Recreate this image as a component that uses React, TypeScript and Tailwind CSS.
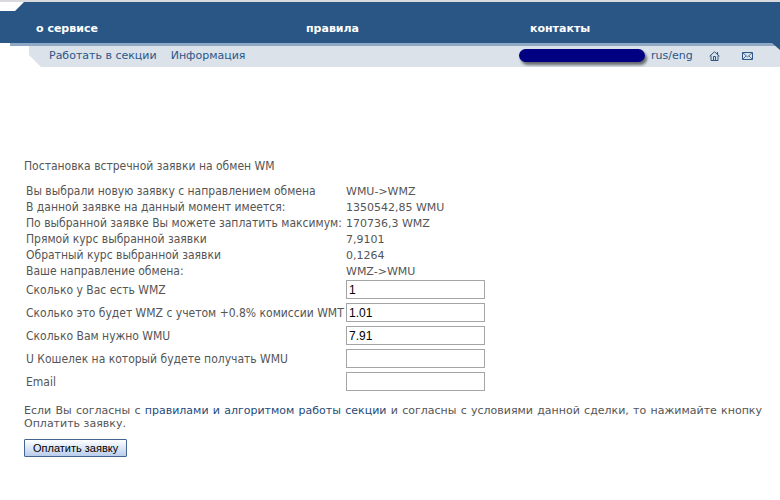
import { useState } from 'react'

const details = [
  { label: 'Вы выбрали новую заявку с направлением обмена', value: 'WMU->WMZ' },
  { label: 'В данной заявке на данный момент имеется:', value: '1350542,85 WMU' },
  { label: 'По выбранной заявке Вы можете заплатить максимум:', value: '170736,3 WMZ' },
  { label: 'Прямой курс выбранной заявки', value: '7,9101' },
  { label: 'Обратный курс выбранной заявки', value: '0,1264' },
  { label: 'Ваше направление обмена:', value: 'WMZ->WMU' },
]

const fields = [
  { id: 'have', label: 'Сколько у Вас есть WMZ' },
  { id: 'total', label: 'Сколько это будет WMZ с учетом +0.8% комиссии WMT' },
  { id: 'need', label: 'Сколько Вам нужно WMU' },
  { id: 'purse', label: 'U Кошелек на который будете получать WMU' },
  { id: 'email', label: 'Email' },
]

function HomeIcon() {
  return (
    <svg className="h-[10px] w-[11px]" viewBox="0 0 11 10" fill="none" stroke="#2b5687">
      <path d="M0.5 5.2L5.5 0.8L10.5 5.2M2 4.5V9.5H9V4.5M8.5 3V1" />
      <path d="M4.5 9V5.5H6.5V9" />
    </svg>
  )
}

function MailIcon() {
  return (
    <svg className="h-2 w-[11px]" viewBox="0 0 11 8" fill="none" stroke="#2b5687">
      <path d="M0.5 0.5H10.5V7.5H0.5Z" />
      <path d="M1 1L5.5 4.8L10 1M1 7L4 4M10 7L7 4" strokeWidth="0.8" />
    </svg>
  )
}

function Header() {
  return (
    <header className="relative border-t-2 border-[#d9dadd] text-[11px] leading-[14px]">
      <nav className="grid h-[41px] grid-cols-[270px_224px_1fr] bg-[#2a5685] pt-5 pl-9 font-bold text-white [clip-path:polygon(24px_0,100%_0,100%_100%,0_100%,0_9px,15px_9px)]">
        <a href="#service">о сервисе</a>
        <a href="#rules">правила</a>
        <a href="#contacts">контакты</a>
      </nav>
      <div className="ml-[10px] h-[3px] bg-[#8fa8c3]" />
      <div className="ml-[29px] flex h-[21px] items-center bg-[#dbe2ea] pb-[2px] pl-5 text-[#2b5687] [clip-path:polygon(0_0,100%_0,100%_100%,12px_100%,0_9px)]">
        <a href="#work">Работать в секции</a>
        <a href="#info" className="ml-[14px]">
          Информация
        </a>
        <span className="ml-auto h-[13px] w-[126px] rounded-full bg-[#000080] shadow-[2px_3px_3px_#0008]" />
        <a href="#lang" className="ml-[6px] w-11">
          rus/eng
        </a>
        <a href="#home" aria-label="Home" className="ml-[14px]">
          <HomeIcon />
        </a>
        <a href="#mail" aria-label="Mail" className="mr-[27px] ml-[22px]">
          <MailIcon />
        </a>
      </div>
      <svg className="absolute top-[41px] right-0 h-[7px] w-2" viewBox="0 0 8 7" fill="#2a5685">
        <path d="M0 0H8V7Z" />
      </svg>
    </header>
  )
}

export default function App() {
  const [values, setValues] = useState<Record<string, string>>({
    have: '1',
    total: '1.01',
    need: '7.91',
    purse: '',
    email: '',
  })

  return (
    <div className="bg-white font-['DejaVu_Sans',Verdana,sans-serif] text-[#555]">
      <Header />
      <main className="pt-[91px] pr-[18px] pl-6 text-xs leading-4">
        <h1 className="font-['DejaVu_Sans_Condensed','DejaVu_Sans',Verdana,sans-serif]">
          Постановка встречной заявки на обмен WM
        </h1>
        <form onSubmit={(e) => e.preventDefault()}>
          <table className="mt-[9px] ml-[2px] border-collapse font-['DejaVu_Sans_Condensed','DejaVu_Sans',Verdana,sans-serif] whitespace-nowrap">
            <tbody>
              {details.map((row) => (
                <tr key={row.label} className="h-4">
                  <td className="w-[320px] max-w-[320px] p-0 align-baseline">{row.label}</td>
                  <td className="p-0 align-baseline font-['DejaVu_Sans',Verdana,sans-serif] text-[11px] leading-[14px]">
                    {row.value}
                  </td>
                </tr>
              ))}
              {fields.map((field) => (
                <tr key={field.id} className="h-[23px]">
                  <td className="w-[320px] max-w-[320px] p-0 align-top leading-[22px]">
                    <label htmlFor={field.id}>{field.label}</label>
                  </td>
                  <td className="p-0 align-top">
                    <input
                      id={field.id}
                      type="text"
                      value={values[field.id]}
                      onChange={(e) => setValues({ ...values, [field.id]: e.target.value })}
                      className="mt-px block h-[19px] w-[139px] border border-[#a5a5a5] bg-white px-[2px] font-['Liberation_Sans',Arial,sans-serif] text-xs text-black"
                    />
                  </td>
                </tr>
              ))}
            </tbody>
          </table>
          <p className="mt-[10px] text-justify text-[11px] leading-[13px]">
            Если Вы согласны с{' '}
            <a href="#terms" className="text-[#1f4a7a]">
              правилами и алгоритмом работы секции
            </a>{' '}
            и согласны с условиями данной сделки, то нажимайте кнопку Оплатить заявку.
          </p>
          <button
            type="submit"
            className="mt-[9px] block h-[18px] rounded-[1px] border border-[#45658f] bg-linear-to-b from-white to-[#b9cdec] px-2 font-['Liberation_Sans',Arial,sans-serif] text-[11px] leading-4 text-black"
          >
            Оплатить заявку
          </button>
        </form>
      </main>
    </div>
  )
}
